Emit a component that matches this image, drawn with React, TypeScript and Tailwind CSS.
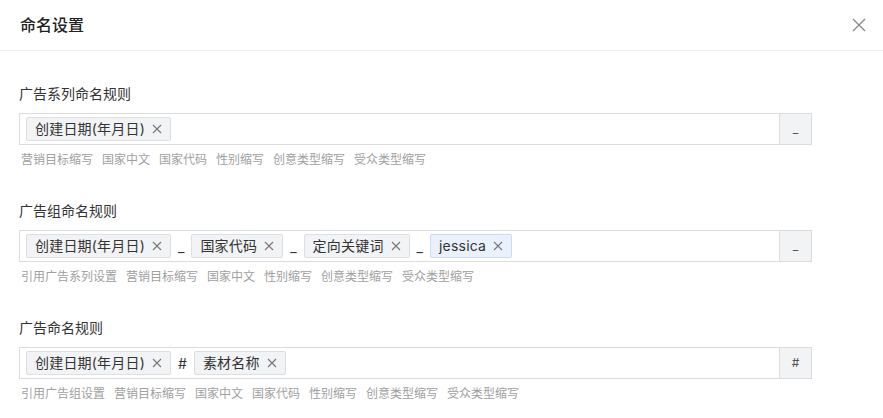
import React from "react";

type TagT = { text: string; blue?: boolean };
type Item = { kind: "tag"; tag: TagT } | { kind: "sep"; s: string };

function Tag({ t }: { t: TagT }) {
  return (
    <span
      className={
        "inline-flex h-[24px] items-center gap-[7px] rounded-[2px] border px-[8px] text-[14px] leading-none text-[#333] " +
        (t.blue ? "border-[#c9dbf7] bg-[#eaf1fd]" : "border-[#dcdfe3] bg-[#f2f3f5]")
      }
    >
      <span className="tracking-[0.2px]">{t.text}</span>
      <svg width="10" height="10" viewBox="0 0 10 10">
        <path d="M1 1L9 9M9 1L1 9" stroke="#777" strokeWidth="1.1" />
      </svg>
    </span>
  );
}

function Section({
  label,
  items,
  addon,
  hints,
}: {
  label: string;
  items: Item[];
  addon: string;
  hints: string[];
}) {
  return (
    <div className="mb-[30px]">
      <div className="h-[22px] text-[14px] leading-[22px] text-[#333]">{label}</div>
      <div className="mt-[8px] flex h-[32px] w-[793px]">
        <div className="flex flex-1 items-center gap-[7px] border border-[#dcdcdc] pl-[6px]">
          {items.map((it, i) =>
            it.kind === "tag" ? (
              <Tag key={i} t={it.tag} />
            ) : (
              <span key={i} className="text-[14px] text-[#333]">
                {it.s}
              </span>
            )
          )}
        </div>
        <div className="flex w-[32px] items-center justify-center border border-l-0 border-[#dcdcdc] bg-[#f2f3f5] text-[12px] text-[#555]">
          {addon}
        </div>
      </div>
      <div className="mt-[5px] flex h-[20px] items-center gap-[9px] pl-[2px] text-[12px] text-[#a0a0a0]">
        {hints.map((h) => (
          <span key={h}>{h}</span>
        ))}
      </div>
    </div>
  );
}

export default function App() {
  const d: TagT = { text: "创建日期(年月日)" };
  return (
    <div
      className="h-[418px] w-[883px] overflow-hidden bg-white"
      style={{ fontFamily: '"Inter", "Noto Sans CJK SC", sans-serif' }}
    >
      <div className="flex h-[51px] items-center justify-between border-b border-[#ececec] pl-[20px] pr-[17px]">
        <span className="text-[16px] font-medium text-[#222]">命名设置</span>
        <svg width="14" height="14" viewBox="0 0 14 14">
          <path d="M1 1L13 13M13 1L1 13" stroke="#888" strokeWidth="1.3" />
        </svg>
      </div>
      <div className="pl-[19px] pt-[32px]">
        <Section
          label="广告系列命名规则"
          items={[{ kind: "tag", tag: d }]}
          addon="_"
          hints={["营销目标缩写", "国家中文", "国家代码", "性别缩写", "创意类型缩写", "受众类型缩写"]}
        />
        <Section
          label="广告组命名规则"
          items={[
            { kind: "tag", tag: d },
            { kind: "sep", s: "_" },
            { kind: "tag", tag: { text: "国家代码" } },
            { kind: "sep", s: "_" },
            { kind: "tag", tag: { text: "定向关键词" } },
            { kind: "sep", s: "_" },
            { kind: "tag", tag: { text: "jessica", blue: true } },
          ]}
          addon="_"
          hints={["引用广告系列设置", "营销目标缩写", "国家中文", "性别缩写", "创意类型缩写", "受众类型缩写"]}
        />
        <Section
          label="广告命名规则"
          items={[
            { kind: "tag", tag: d },
            { kind: "sep", s: "#" },
            { kind: "tag", tag: { text: "素材名称" } },
          ]}
          addon="#"
          hints={["引用广告组设置", "营销目标缩写", "国家中文", "国家代码", "性别缩写", "创意类型缩写", "受众类型缩写"]}
        />
      </div>
    </div>
  );
}
